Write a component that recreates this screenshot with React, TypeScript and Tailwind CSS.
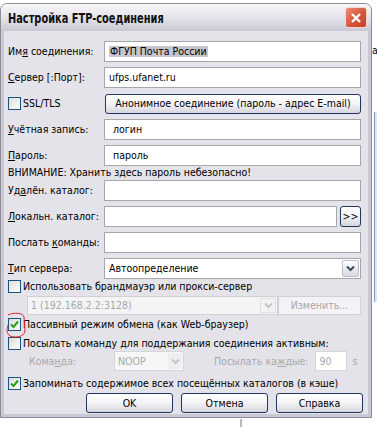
import React from "react";

const font = "font-['DejaVu_Sans_Condensed','DejaVu_Sans',sans-serif] font-stretch-condensed";

function Chevron({ faded }: { faded?: boolean }) {
  return (
    <svg width="9" height="7" viewBox="0 0 9 7">
      <path d="M1 1.5 L4.5 5 L8 1.5" fill="none" stroke={faded ? "#c3c3c3" : "#3d4b63"} strokeWidth="2" />
    </svg>
  );
}

function Checkbox({ checked }: { checked?: boolean }) {
  return (
    <span className="w-[13px] h-[13px] shrink-0 border border-[#1c5180] bg-gradient-to-br from-[#dcdcd7] to-white flex items-center justify-center">
      {checked && (
        <svg width="9" height="9" viewBox="0 0 9 9">
          <path d="M1 4.5 L3.5 7 L8 1.5" fill="none" stroke="#21a121" strokeWidth="2" />
        </svg>
      )}
    </span>
  );
}

function Field({ children, className = "" }: { children?: React.ReactNode; className?: string }) {
  return (
    <div className={`h-[21px] flex-1 border border-[#a7a6aa] bg-white flex items-center px-[4px] ${className}`}>
      {children}
    </div>
  );
}

function Row({ label, children }: { label: React.ReactNode; children: React.ReactNode }) {
  return (
    <div className="flex items-center h-[21px]">
      <span className="w-[96px] shrink-0">{label}</span>
      {children}
    </div>
  );
}

function Button({ children, className = "" }: { children: React.ReactNode; className?: string }) {
  return (
    <div className={`rounded-[3px] border border-[#21355f] bg-gradient-to-b from-white via-[#f3f3f6] to-[#d6d5de] flex items-center justify-center ${className}`}>
      {children}
    </div>
  );
}

export default function App() {
  return (
    <div className={`relative w-[377px] h-[427px] bg-white overflow-hidden text-[10.5px] text-black whitespace-nowrap ${font} leading-none`}>
      {/* bits of the window behind */}
      <span className="absolute left-[372px] top-[45px]">а</span>
      <div className="absolute left-[374px] top-[112px] w-[3px] h-[190px] border-l border-[#7f9db9] bg-[#dfe6f2]" />
      <div className="absolute left-[240px] top-[419px] w-[2px] h-[8px] bg-[#b8b8c0]" />

      <div className="relative w-[372px] mt-[3px] rounded-t-[7px] border border-[#8d8d96] bg-[#e4e3e9]">
        {/* Title bar */}
        <div className="h-[27px] rounded-t-[6px] bg-gradient-to-b from-[#f7f7fa] via-[#e3e3ea] to-[#c9c8d4] flex items-center justify-between pl-[7px] pr-[4px]">
          <span className="inline-block origin-left scale-x-[0.78] text-[14px] font-bold text-[#111] pt-[1px]">Настройка FTP-соединения</span>
          <div className="w-[22px] h-[21px] rounded-[3px] border border-[#f3d8d2] bg-gradient-to-br from-[#e98c77] via-[#d75a3f] to-[#c33b22] flex items-center justify-center">
            <svg width="12" height="12" viewBox="0 0 12 12">
              <path d="M2 2 L10 10 M10 2 L2 10" stroke="white" strokeWidth="2.4" />
            </svg>
          </div>
        </div>

        {/* Body */}
        <div className="border-x-[3px] border-b-[3px] border-[#c9c8d4] px-[4px] pt-[10px] pb-[1px] flex flex-col">
          <div className="flex flex-col gap-[5px] pr-[3px]">
            <Row label={<>Им<u>я</u> соединения:</>}>
              <Field><span className="bg-[#c6c5cd] px-[1px]">ФГУП Почта России</span></Field>
            </Row>
            <Row label={<><u>С</u>ервер [:Порт]:</>}>
              <Field>ufps.ufanet.ru</Field>
            </Row>
            <div className="flex items-center h-[21px]">
              <span className="w-[97px] shrink-0 flex items-center gap-[2px]">
                <Checkbox />
                SSL/TLS
              </span>
              <Button className="flex-1 h-[20px]">Анонимное соединение (пароль - адрес E-mail)</Button>
            </div>
            <Row label={<><u>У</u>чётная запись:</>}>
              <Field><span className="pl-[4px]">логин</span></Field>
            </Row>
            <Row label={<><u>П</u>ароль:</>}>
              <Field><span className="pl-[4px]">пароль</span></Field>
            </Row>
          </div>
          <div className="h-[13px] flex items-center">ВНИМАНИЕ: Хранить здесь пароль небезопасно!</div>
          <div className="flex flex-col gap-[5px] mt-[1px] pr-[3px]">
            <Row label={<>Уд<u>а</u>лён. каталог:</>}>
              <Field />
            </Row>
            <Row label={<><u>Л</u>окальн. каталог:</>}>
              <Field />
              <Button className="w-[21px] h-[21px] ml-[3px] shrink-0 border-[#5a6c8f]">&gt;&gt;</Button>
            </Row>
            <Row label={<>Послать <u>к</u>оманды:</>}>
              <Field />
            </Row>
            <Row label={<><u>Т</u>ип сервера:</>}>
              <Field className="pr-[1px] justify-between">
                <span>Автоопределение</span>
                <span className="w-[17px] h-[17px] rounded-[2px] border border-[#b9bfcc] bg-gradient-to-b from-white to-[#d8dae3] flex items-center justify-center">
                  <Chevron />
                </span>
              </Field>
            </Row>
          </div>

          <div className="flex items-center gap-[2px] h-[13px] mt-[1px]">
            <Checkbox />
            <span>Использовать брандмауэр или прокси-сервер</span>
          </div>
          <div className="flex items-center h-[19px] mt-[3px] pl-[19px] pr-[3px]">
            <div className="w-[251px] h-[19px] border border-[#cfcfd4] bg-[#f4f4f4] flex items-center justify-between pl-[3px] pr-[1px] text-[#a7a7a7]">
              <span>1 (192.168.2.2:3128)</span>
              <span className="w-[16px] h-[15px] border border-[#e0e0e4] bg-[#f2f2f4] flex items-center justify-center">
                <Chevron faded />
              </span>
            </div>
            <div className="ml-auto w-[83px] h-[19px] rounded-[2px] border border-[#d2d1d8] bg-[#f3f3f5] text-[#a7a7a7] flex items-center justify-center">Изменить...</div>
          </div>

          <div className="flex items-center gap-[2px] h-[13px] mt-[3px]">
            <Checkbox checked />
            <span>Пассивный режим обмена (как Web-браузер)</span>
          </div>
          <div className="flex items-center gap-[2px] h-[13px] mt-[6px]">
            <Checkbox />
            <span>Посылать команду для поддержания соединения активным:</span>
          </div>
          <div className="flex items-center h-[20px] mt-[1px] pl-[21px] text-[#a9a9a9]">
            <span className="w-[85px]">Кома<u>н</u>да:</span>
            <div className="w-[70px] h-[20px] border border-[#d6d6da] bg-[#f6f6f6] flex items-center justify-between pl-[3px] pr-[1px]">
              <span>NOOP</span>
              <span className="w-[14px] h-[16px] bg-[#efeff2] flex items-center justify-center">
                <Chevron faded />
              </span>
            </div>
            <span className="ml-[30px]">Посылать ка<u>ж</u>дые:</span>
            <div className="ml-[7px] w-[32px] h-[20px] border border-[#d6d6da] bg-white flex items-center pl-[3px]">90</div>
            <span className="ml-[5px]">s</span>
          </div>
          <div className="flex items-center gap-[2px] h-[13px] mt-[6px]">
            <Checkbox checked />
            <span>Запоминать содержимое всех посещённых каталогов (в кэше)</span>
          </div>
          <div className="flex justify-end gap-[8px] mt-[3px] pr-[1px]">
            <Button className="w-[87px] h-[20px]">OK</Button>
            <Button className="w-[87px] h-[20px]">Отмена</Button>
            <Button className="w-[87px] h-[20px]">Справка</Button>
          </div>
        </div>

        {/* red hand-drawn mark */}
        <svg className="absolute left-[3px] top-[307px]" width="24" height="28" viewBox="0 0 24 28">
          <path d="M4 4 C 10 1, 20 2, 20 6 L 21 20 C 20 26, 12 27, 6 25 C 2 22, 3 18, 4 14" fill="none" stroke="#e0262b" strokeWidth="1" />
        </svg>
      </div>
    </div>
  );
}
